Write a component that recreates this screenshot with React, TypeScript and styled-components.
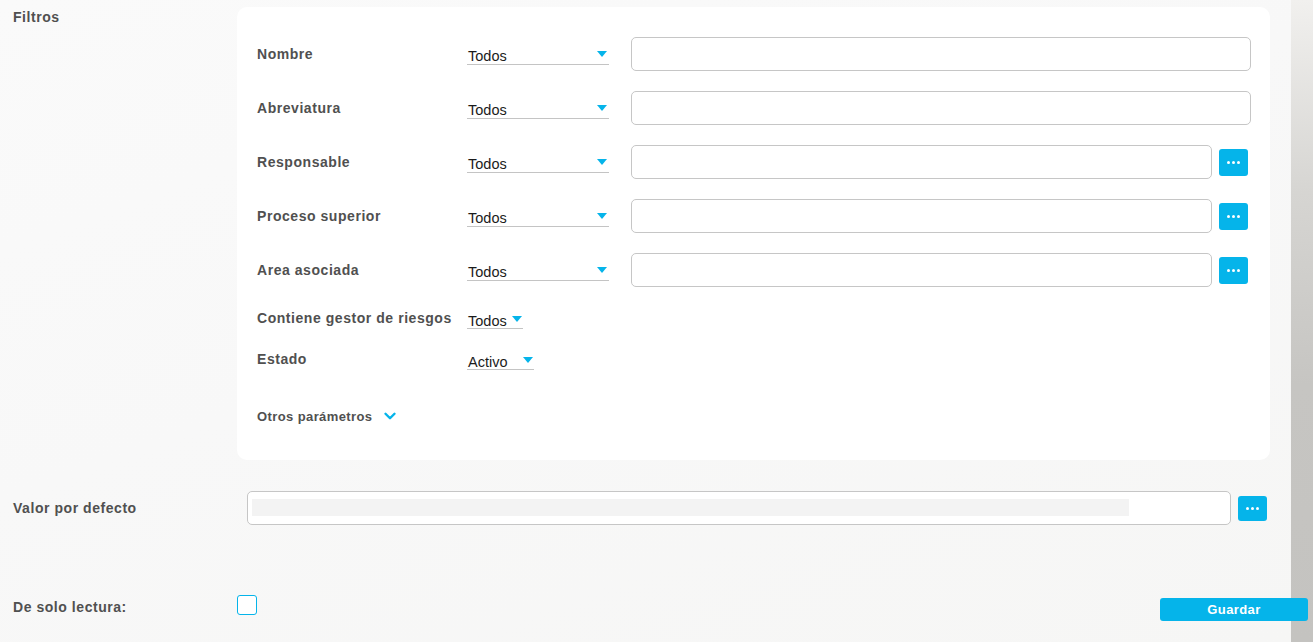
import React from 'react';
import styled, { createGlobalStyle } from 'styled-components';
import { ChevronDown } from 'lucide-react';

const GlobalStyle = createGlobalStyle`
    html, body {
        margin: 0;
        padding: 0;
        background: #f9f9f9;
    }
    * {
        box-sizing: border-box;
    }
`;

const BLUE = '#05b4ea';

const Page = styled.div`
    display: flex;
    width: 1313px;
    height: 642px;
    overflow: hidden;
    font-family: 'Liberation Sans', Arial, sans-serif;
`;

const Main = styled.div`
    width: 1291px;
    flex-shrink: 0;
    display: flex;
    flex-direction: column;
    background: linear-gradient(160deg, #fafafa 0%, #f8f8f8 45%, #f6f6f5 100%);
`;

const SideStrip = styled.div`
    flex: 1;
    background: linear-gradient(180deg, #f1f0ee 0%, #d6d5d2 30%, #c6c5c2 60%, #c4c3c0 100%);
`;

const Label = styled.div<{ $width?: number }>`
    width: ${(p) => (p.$width ? `${p.$width}px` : 'auto')};
    flex-shrink: 0;
    color: #505050;
    font-size: 14px;
    font-weight: bold;
    letter-spacing: 0.55px;
`;

const FilterSection = styled.section`
    display: flex;
    padding-left: 13px;
`;

const SectionTitle = styled(Label)`
    width: 224px;
    padding-top: 9px;
`;

const Panel = styled.div`
    width: 1033px;
    height: 453px;
    margin-top: 7px;
    background: #fff;
    border-radius: 10px;
    padding: 30px 19px 0 20px;
    display: flex;
    flex-direction: column;
`;

const FilterRow = styled.div<{ $gap: number; $height: number }>`
    display: flex;
    align-items: center;
    height: ${(p) => p.$height}px;
    margin-top: ${(p) => p.$gap}px;
`;

const SelectBox = styled.div<{ $width: number }>`
    width: ${(p) => p.$width}px;
    flex-shrink: 0;
    display: flex;
    align-items: center;
    justify-content: space-between;
    align-self: flex-end;
    margin-bottom: 6px;
    border-bottom: 1px solid #c4c4c4;
    padding: 0 2px 0 1px;
    height: 20px;
    color: #1b1b1b;
    font-size: 14.5px;
`;

const SelectText = styled.span`
    padding-top: 3px;
`;

const Caret = styled.span`
    width: 0;
    height: 0;
    border-left: 5px solid transparent;
    border-right: 5px solid transparent;
    border-top: 6px solid ${BLUE};
    margin-bottom: 1px;
`;

const TextBox = styled.div`
    flex: 1;
    height: 34px;
    margin-left: 22px;
    background: #fff;
    border: 1px solid #c6c6c6;
    border-radius: 5px;
`;

const DotsButton = styled.button<{ $height?: number }>`
    width: 29px;
    height: ${(p) => p.$height ?? 27}px;
    flex-shrink: 0;
    margin-left: 7px;
    margin-right: 3px;
    padding: 0;
    border: none;
    border-radius: 3px;
    background: ${BLUE};
    display: flex;
    align-items: center;
    justify-content: center;
    gap: 2px;
`;

const Dot = styled.span`
    width: 3px;
    height: 3px;
    border-radius: 50%;
    background: #fff;
`;

const ShortRow = styled.div<{ $gap: number }>`
    display: flex;
    align-items: flex-start;
    margin-top: ${(p) => p.$gap}px;
`;

const ShortLabel = styled(Label)`
    padding-top: 2px;
`;

const ShortSelect = styled(SelectBox)`
    align-self: auto;
    margin: 2px 0 0;
    height: 19px;
    padding-right: 1px;
`;

const MoreToggle = styled.div`
    display: flex;
    align-items: center;
    gap: 8px;
    margin-top: 37px;
    color: #505050;
    font-size: 13px;
    font-weight: bold;
    letter-spacing: 0.4px;
`;

const DefaultRow = styled.div`
    display: flex;
    align-items: center;
    margin-top: 31px;
    padding-left: 13px;
    height: 34px;
`;

const DefaultInput = styled.div`
    width: 984px;
    height: 34px;
    border: 1px solid #c6c6c6;
    border-radius: 5px;
    background: #fff;
    padding: 7px 0 0 4px;
`;

const InnerFill = styled.div`
    width: 877px;
    height: 17px;
    background: #f3f3f3;
`;

const BottomRow = styled.div`
    display: flex;
    align-items: flex-start;
    margin-top: 70px;
    padding-left: 13px;
`;

const Checkbox = styled.div`
    width: 20px;
    height: 20px;
    border: 1px solid ${BLUE};
    border-radius: 3px;
    background: #fff;
`;

const ReadOnlyLabel = styled(Label)`
    padding-top: 4px;
`;

const SaveButton = styled.button`
    position: relative;
    z-index: 1;
    margin: 3px -17px 0 auto;
    width: 148px;
    height: 23px;
    border: none;
    border-radius: 3px;
    background: ${BLUE};
    color: #fff;
    font-family: 'Liberation Sans', Arial, sans-serif;
    font-size: 13px;
    font-weight: bold;
    letter-spacing: 0.4px;
`;

const Dots: React.FC<{ height?: number }> = ({ height }) => (
    <DotsButton $height={height}>
        <Dot />
        <Dot />
        <Dot />
    </DotsButton>
);

interface Filter {
    label: string;
    lookup: boolean;
}

const filters: Filter[] = [
    { label: 'Nombre', lookup: false },
    { label: 'Abreviatura', lookup: false },
    { label: 'Responsable', lookup: true },
    { label: 'Proceso superior', lookup: true },
    { label: 'Area asociada', lookup: true },
];

const App: React.FC = () => {
    return (
        <>
            <GlobalStyle />
            <Page>
                <Main>
                    <FilterSection>
                        <SectionTitle>Filtros</SectionTitle>
                        <Panel>
                            {filters.map((f, i) => (
                                <FilterRow key={f.label} $gap={i === 0 ? 0 : 20} $height={34}>
                                    <Label $width={210}>{f.label}</Label>
                                    <SelectBox $width={142}>
                                        <SelectText>Todos</SelectText>
                                        <Caret />
                                    </SelectBox>
                                    <TextBox />
                                    {f.lookup && <Dots />}
                                </FilterRow>
                            ))}
                            <ShortRow $gap={21}>
                                <ShortLabel $width={210}>Contiene gestor de riesgos</ShortLabel>
                                <ShortSelect $width={56}>
                                    <SelectText>Todos</SelectText>
                                    <Caret />
                                </ShortSelect>
                            </ShortRow>
                            <ShortRow $gap={20}>
                                <ShortLabel $width={210}>Estado</ShortLabel>
                                <ShortSelect $width={67}>
                                    <SelectText>Activo</SelectText>
                                    <Caret />
                                </ShortSelect>
                            </ShortRow>
                            <MoreToggle>
                                Otros parámetros
                                <ChevronDown size={18} color={BLUE} strokeWidth={3.2} />
                            </MoreToggle>
                        </Panel>
                    </FilterSection>
                    <DefaultRow>
                        <Label $width={234}>Valor por defecto</Label>
                        <DefaultInput>
                            <InnerFill />
                        </DefaultInput>
                        <Dots height={25} />
                    </DefaultRow>
                    <BottomRow>
                        <ReadOnlyLabel $width={224}>De solo lectura:</ReadOnlyLabel>
                        <Checkbox />
                        <SaveButton>Guardar</SaveButton>
                    </BottomRow>
                </Main>
                <SideStrip />
            </Page>
        </>
    );
};

export default App;
